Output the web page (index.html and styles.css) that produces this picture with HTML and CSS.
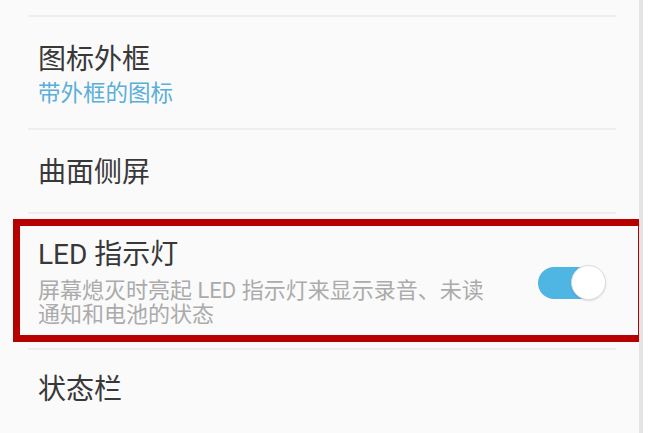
FILE: index.html
```html
<!DOCTYPE html>
<html lang="zh-CN">
<head>
  <meta charset="UTF-8" />
  <title>显示设置</title>
  <link rel="stylesheet" href="styles.css">
</head>
<body>
  <div class="screen">
    <div class="divider"></div>
    <div class="item first">
      <div class="title">图标外框</div>
      <div class="sub blue">带外框的图标</div>
    </div>
    <div class="divider"></div>
    <div class="item second">
      <div class="title">曲面侧屏</div>
    </div>
    <div class="divider"></div>

    <div class="highlight">
      <div class="text">
        <div class="title">LED 指示灯</div>
        <div class="sub gray">屏幕熄灭时亮起 LED 指示灯来显示录音、未读<br>通知和电池的状态</div>
      </div>
      <div class="toggle">
        <div class="knob"></div>
      </div>
    </div>

    <div class="divider low"></div>
    <div class="item last">
      <div class="title">状态栏</div>
    </div>
  </div>
</body>
</html>
```

FILE: styles.css
```css
html, body {
  margin: 0;
  background: #fff;
}
body {
  font-family: Roboto, "Noto Sans CJK SC", sans-serif;
  color: #333;
}
.screen {
  width: 643px;
  height: 433px;
  padding-top: 15px;
  box-sizing: border-box;
  background: #fafafa;
  border-right: 4px solid #e4e4e4;
  overflow: hidden;
}
.divider {
  height: 2px;
  margin: 0 23px 0 28px;
  background: #eeeeee;
}
.divider.low {
  margin-top: 6px;
}
.item {
  padding: 0 38px;
}
.item.first {
  padding-top: 26px;
  padding-bottom: 23px;
}
.item.second {
  padding-top: 26px;
  padding-bottom: 22px;
}
.item.last {
  padding-top: 23px;
}
.title {
  font-size: 28px;
  line-height: 34px;
  color: #383838;
}
.sub {
  font-size: 22.5px;
  line-height: 24px;
  margin-top: 4px;
}
.blue {
  color: #5aafd8;
}
.gray {
  font-size: 22px;
  color: #ababab;
  line-height: 24px;
  margin-top: 7px;
}
.highlight {
  margin: 5px 0 0 13px;
  width: 632px;
  box-sizing: border-box;
  border: 7px solid #b70000;
  padding: 12px 34px 8px 18px;
  display: flex;
  align-items: center;
  justify-content: space-between;
}
.toggle {
  position: relative;
  width: 66px;
  height: 32px;
  border-radius: 16px;
  background: #4fb5e2;
}
.knob {
  position: absolute;
  right: -2px;
  top: -2px;
  width: 33px;
  height: 33px;
  border-radius: 50%;
  background: #fff;
  border: 1.5px solid #dcdcdc;
  box-shadow: 0 1px 2px rgba(0, 0, 0, 0.12);
}
```
